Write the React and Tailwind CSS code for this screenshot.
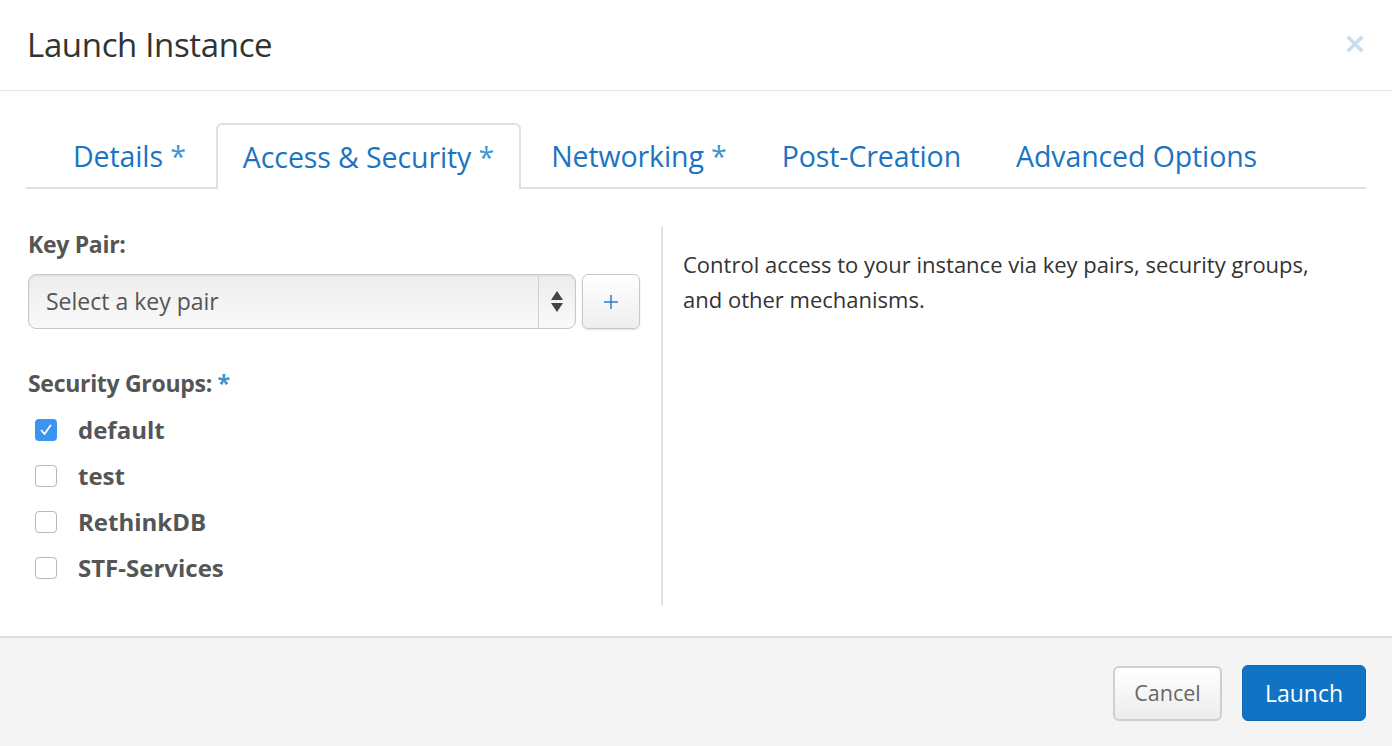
import React from "react";

function Check({ checked }) {
  return checked ? (
    <span className="flex h-[22px] w-[22px] items-center justify-center rounded-[4px] bg-[#3b95f0]">
      <svg width="14" height="14" viewBox="0 0 14 14" fill="none">
        <path d="M2.5 7.5 L5.5 11 L11.5 2.5" stroke="white" strokeWidth="1.8" strokeLinecap="round" strokeLinejoin="round" />
      </svg>
    </span>
  ) : (
    <span className="block h-[22px] w-[22px] rounded-[4px] border border-[#b8b8b8] bg-white" />
  );
}

export default function App() {
  const tabs = [
    { label: "Details", star: true },
    { label: "Access & Security", star: true, active: true },
    { label: "Networking", star: true },
    { label: "Post-Creation" },
    { label: "Advanced Options" },
  ];
  const groups = [
    { name: "default", checked: true },
    { name: "test" },
    { name: "RethinkDB" },
    { name: "STF-Services" },
  ];
  return (
    <div className="flex h-[746px] w-[1392px] flex-col bg-white" style={{ fontFamily: "'Open Sans', Lato, sans-serif" }}>
      {/* header */}
      <div className="flex h-[91px] shrink-0 items-center justify-between border-b border-[#e6e6e6] pl-[27px] pr-[27px]">
        <h1 className="text-[33px] font-normal tracking-[-0.35px] text-[#333]">Launch Instance</h1>
        <svg width="20" height="20" viewBox="0 0 20 20" className="mt-[-2px]">
          <path d="M4 4 L16 16 M16 4 L4 16" stroke="#c6def1" strokeWidth="3.6" strokeLinecap="square" />
        </svg>
      </div>

      {/* tabs */}
      <div className="mx-[26px] mt-[32px] flex h-[66px] shrink-0 items-end border-b-2 border-[#e0e0e0] pl-[22px]">
        {tabs.map((t) => (
          <div
            key={t.label}
            className={
              "mr-[5px] mb-[-2px] flex h-[66px] items-center px-[25px] pt-[1px] text-[28.5px] tracking-[-0.1px] text-[#1b74c1] " +
              (t.active ? "rounded-t-[6px] border-2 border-b-0 border-[#e0e0e0] bg-white px-[23px]" : "")
            }
          >
            <span>
              {t.label}
              {t.star ? <span className="text-[#3a95d3]"> *</span> : null}
            </span>
          </div>
        ))}
      </div>

      {/* body */}
      <div className="flex flex-1 items-start pl-[28px] pr-[26px] pt-[38px]">
        <div className="h-[378px] w-[635px] shrink-0 border-r-2 border-[#e0e0e0] pr-[21px] pt-[4px]">
          <div className="text-[23px] font-bold leading-[26px] tracking-[-0.3px] text-[#555]">Key Pair:</div>
          <div className="mt-[17px] flex gap-[6px]">
            <div className="flex h-[55px] flex-1 items-center rounded-[8px] border border-[#c8c8c8] bg-gradient-to-b from-[#ededed] to-[#f9f9f9] shadow-[inset_0_1px_2px_rgba(0,0,0,0.08)]">
              <span className="flex-1 pl-[17px] text-[23px] text-[#555]">Select a key pair</span>
              <span className="flex h-full w-[37px] flex-col items-center justify-center gap-[3px] border-l border-[#d0d0d0]">
                <svg width="12" height="9" viewBox="0 0 12 9"><path d="M6 0 L12 9 L0 9 Z" fill="#444" /></svg>
                <svg width="12" height="9" viewBox="0 0 12 9"><path d="M0 0 L12 0 L6 9 Z" fill="#444" /></svg>
              </span>
            </div>
            <div className="flex h-[55px] w-[58px] items-center justify-center rounded-[6px] border border-[#c8c8c8] bg-gradient-to-b from-white to-[#eeeeee] shadow-[0_1px_2px_rgba(0,0,0,0.12)]">
              <svg width="14" height="14" viewBox="0 0 14 14"><path d="M7 0 V14 M0 7 H14" stroke="#2b7ccc" strokeWidth="1.5" /></svg>
            </div>
          </div>
          <div className="mt-[41px] text-[23px] font-bold leading-[26px] tracking-[-0.3px] text-[#555]">
            Security Groups: <span className="text-[#3a95d3]">*</span>
          </div>
          <div className="mt-[23px] flex flex-col gap-[24px]">
            {groups.map((g) => (
              <div key={g.name} className="flex h-[22px] items-center pl-[7px]">
                <Check checked={g.checked} />
                <span className="ml-[21px] text-[24px] font-bold text-[#555]">{g.name}</span>
              </div>
            ))}
          </div>
        </div>
        <div className="pl-[20px] pt-[20px] text-[22px] leading-[35px] text-[#333]">
          Control access to your instance via key pairs, security groups,
          <br />
          and other mechanisms.
        </div>
      </div>

      {/* footer */}
      <div className="flex h-[110px] shrink-0 items-center justify-end gap-[20px] border-t-2 border-[#dcdcdc] bg-[#f4f4f4] pr-[26px] pt-[2px]">
        <button className="h-[55px] w-[109px] rounded-[6px] border-2 border-[#cfcfcf] bg-gradient-to-b from-white to-[#ececec] text-[21.5px] text-[#666]">
          Cancel
        </button>
        <button className="h-[56px] w-[124px] rounded-[6px] border border-[#0f68b3] bg-[#1173c4] text-[23px] text-white">
          Launch
        </button>
      </div>
    </div>
  );
}
